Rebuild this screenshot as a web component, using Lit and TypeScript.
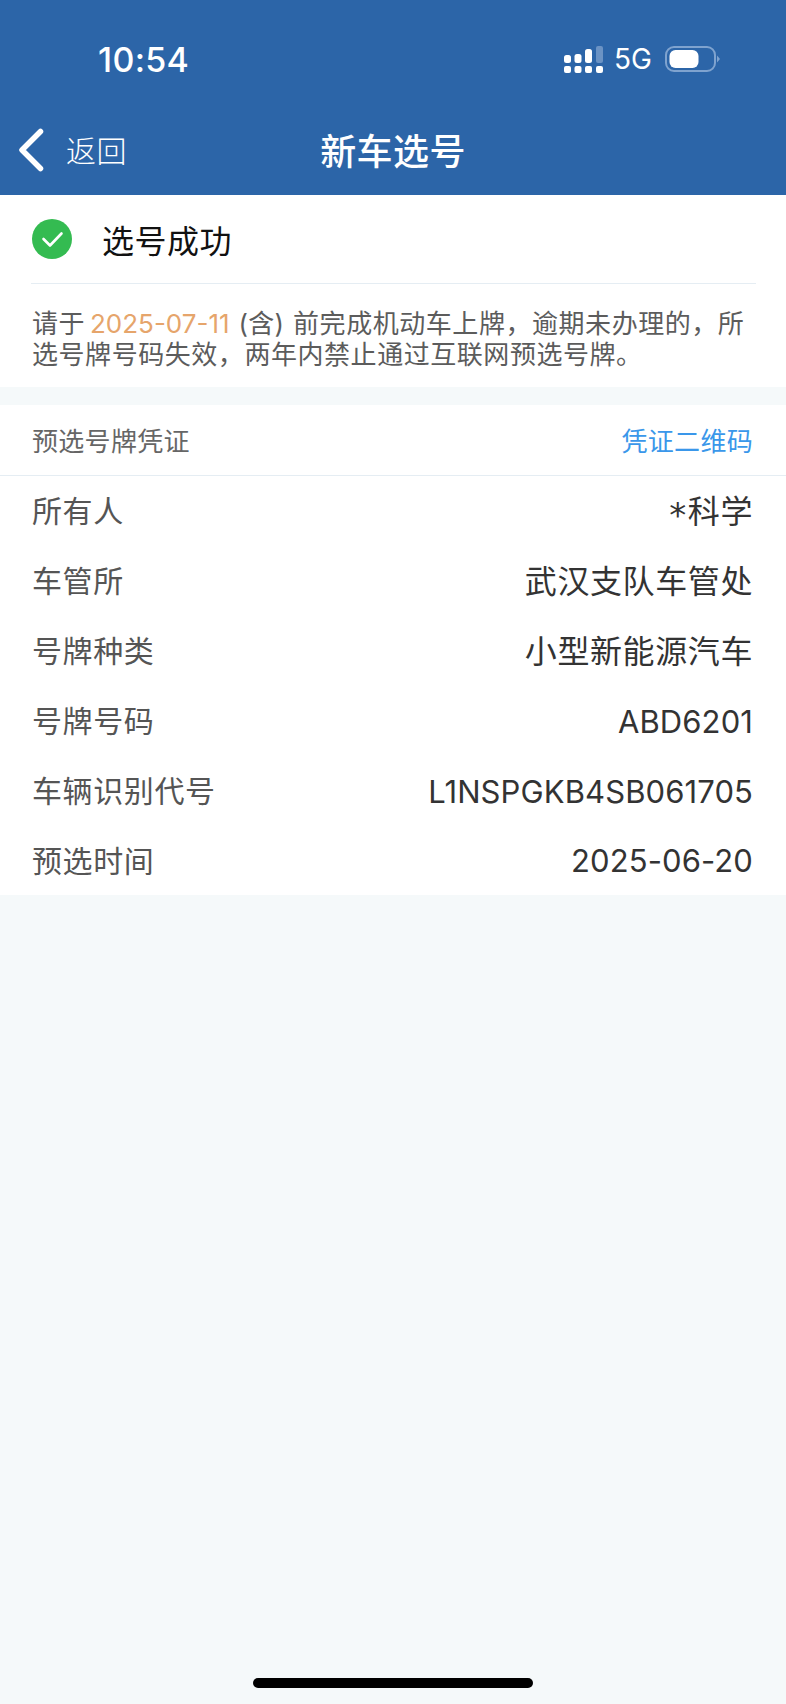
import { LitElement, html, css } from "lit";
import { customElement } from "lit/decorators.js";

const ROWS: [string, unknown, boolean][] = [
  ["所有人", html`<i class="star">*</i>科学`, true],
  ["车管所", "武汉支队车管处", true],
  ["号牌种类", "小型新能源汽车", true],
  ["号牌号码", "ABD6201", false],
  ["车辆识别代号", "L1NSPGKB4SB061705", false],
  ["预选时间", "2025-06-20", false],
];

@customElement("app-root")
export class AppRoot extends LitElement {
  static styles = css`
    :host {
      display: block;
      width: 786px;
      height: 1704px;
      position: relative;
      overflow: hidden;
      background: #f5f9fa;
      font-family: "Inter", "Noto Sans CJK SC", sans-serif;
      text-spacing-trim: space-all;
    }
    .head {
      background: #2c65a8;
      height: 195px;
      color: #fff;
      display: flex;
      flex-direction: column;
    }
    .status {
      height: 100px;
      padding: 40px 66px 0 98px;
      box-sizing: border-box;
      display: flex;
      justify-content: space-between;
      align-items: flex-start;
    }
    .time {
      font-size: 34px;
      line-height: 40px;
      font-weight: 500;
      letter-spacing: 0.3px;
    }
    .sys {
      display: flex;
      align-items: center;
      gap: 14px;
      height: 38px;
    }
    .net {
      font-size: 28px;
      line-height: 38px;
      margin: 0 -1px 0 -3px;
    }
    .nav {
      height: 95px;
      display: grid;
      grid-template-columns: 1fr auto 1fr;
      align-items: center;
      padding-top: 2px;
      box-sizing: border-box;
    }
    .left {
      display: flex;
      align-items: center;
      padding-left: 17px;
    }
    .left svg {
      margin-top: 3px;
    }
    .back {
      font-size: 30px;
      margin-left: 21px;
      font-weight: 300;
      letter-spacing: 0.6px;
    }
    .title {
      font-size: 36px;
      font-weight: 500;
      letter-spacing: 0.4px;
    }
    .card1 {
      background: #fff;
      height: 192px;
      padding: 0 30px 0 31px;
      box-sizing: border-box;
    }
    .ok {
      height: 89px;
      display: flex;
      align-items: center;
      gap: 30px;
      padding: 0 0 1px 1px;
      border-bottom: 1px solid #e5edf3;
      font-size: 32px;
      letter-spacing: 0.5px;
      color: #111;
      box-sizing: border-box;
    }
    .notice {
      margin: 24px 0 0 1px;
      font-size: 26px;
      line-height: 31px;
      letter-spacing: 0.55px;
      color: #5c5c5c;
    }
    .notice b {
      font-weight: 400;
      letter-spacing: 0;
      color: #e6a56b;
      margin-left: -3px;
    }
    .notice .paren {
      margin: 0 1px;
      letter-spacing: 0.25px;
    }
    .card2 {
      margin-top: 18px;
      background: #fff;
    }
    .cap {
      height: 71px;
      display: flex;
      align-items: center;
      justify-content: space-between;
      padding: 0 33px 1px 32px;
      box-sizing: border-box;
      border-bottom: 1px solid #e5edf3;
      font-size: 26px;
      letter-spacing: 0.3px;
      color: #666;
    }
    .cap span + span {
      color: #3a97ea;
    }
    .row {
      height: 70px;
      display: flex;
      align-items: center;
      justify-content: space-between;
      padding: 0 33px 0 32px;
      font-size: 30px;
      color: #555;
    }
    .row:last-child {
      height: 69px;
    }
    .label {
      letter-spacing: 0.6px;
      padding-bottom: 4px;
    }
    .val {
      color: #333;
      font-size: 31px;
      letter-spacing: 0.1px;
    }
    .val.cjk {
      font-size: 32px;
      letter-spacing: 0.6px;
      padding-bottom: 4px;
    }
    .star {
      font-style: normal;
      font-family: "DejaVu Sans", sans-serif;
      font-size: 34px;
      vertical-align: -4px;
      line-height: 1;
      margin-right: 1px;
    }
    .home {
      position: absolute;
      left: 253px;
      bottom: 16px;
      width: 280px;
      height: 10px;
      border-radius: 5px;
      background: #000;
    }
    svg {
      display: block;
      flex: none;
    }
  `;

  render() {
    return html`
      <div class="head">
        <div class="status">
          <span class="time">10:54</span>
          <div class="sys">
            <svg width="39" height="27" viewBox="0 0 39 27" fill="#fff">
              <rect x="0" y="9" width="7" height="8" rx="2.5"></rect>
              <rect x="0" y="20" width="7" height="7" rx="2"></rect>
              <rect x="10.5" y="8" width="7" height="9" rx="2.5"></rect>
              <rect x="10.5" y="20" width="7" height="7" rx="2"></rect>
              <rect x="21" y="3" width="7" height="14" rx="2.5"></rect>
              <rect x="21" y="20" width="7" height="7" rx="2"></rect>
              <rect x="32" y="0" width="7" height="17" rx="2" fill="#6b93c4"></rect>
              <rect x="32" y="20" width="7" height="7" rx="2"></rect>
            </svg>
            <span class="net">5G</span>
            <svg width="55" height="26" viewBox="0 0 55 26">
              <rect x="1" y="1" width="49" height="24" rx="8" fill="none" stroke="#7fa3cf" stroke-width="2"></rect>
              <rect x="4.5" y="4" width="29" height="18" rx="6" fill="#fff"></rect>
              <path d="M52 9.5 L55 13 L52 16.5 Z" fill="#7fa3cf"></path>
            </svg>
          </div>
        </div>
        <div class="nav">
          <div class="left">
            <svg width="28" height="44" viewBox="0 0 28 44" fill="none">
              <path d="M23.5 3.5 L5 22 L23.5 40.5" stroke="#fff" stroke-width="5.5" stroke-linecap="round" stroke-linejoin="round"></path>
            </svg>
            <span class="back">返回</span>
          </div>
          <div class="title">新车选号</div>
          <div></div>
        </div>
      </div>
      <div class="card1">
        <div class="ok">
          <svg width="40" height="40" viewBox="0 0 40 40">
            <circle cx="20" cy="20" r="20" fill="#34bb51"></circle>
            <path d="M11.5 20 L18 26.5 L29.5 14.5" fill="none" stroke="#fff" stroke-width="2.6" stroke-linecap="round" stroke-linejoin="round"></path>
          </svg>
          <span>选号成功</span>
        </div>
        <div class="notice">
          请于 <b>2025-07-11</b> <span class="paren">(含)</span> 前完成机动车上牌，逾期未办理的，所选号牌号码失效，两年内禁止通过互联网预选号牌。
        </div>
      </div>
      <div class="card2">
        <div class="cap"><span>预选号牌凭证</span><span>凭证二维码</span></div>
        ${ROWS.map(
          ([k, v, cjk]) => html`<div class="row"><span class="label">${k}</span><span class="val ${cjk ? "cjk" : ""}">${v}</span></div>`
        )}
      </div>
      <div class="home"></div>
    `;
  }
}
